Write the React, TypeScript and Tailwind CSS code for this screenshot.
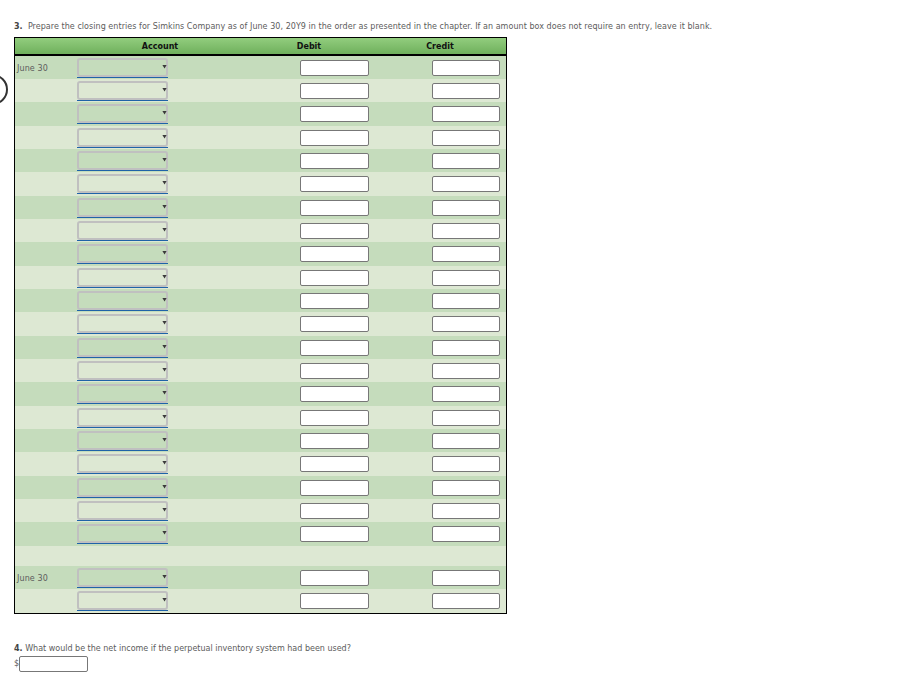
const font = "font-['DejaVu_Sans','Verdana',sans-serif]";

function Caret() {
  return (
    <svg width="5" height="4" viewBox="0 0 5 4" className="absolute right-[-1px] top-[5px]">
      <path d="M0.4 0H4.6L2.6 3.4Z" fill="#3a3a3a" />
    </svg>
  );
}

function Row({ date, index, h }: { date?: string; index: number; h: string }) {
  const bg = index % 2 === 0 ? "bg-[#c5dcbc]" : "bg-[#dde8d3]";
  return (
    <div className={`flex items-start ${h} ${bg}`}>
      <div className="mt-[8px] w-[62px] pl-[2px] text-[8px] leading-[10px] tracking-[0.1px] text-[#5c5c5c]">{date}</div>
      <div className="mt-[2px] w-[223px]">
        <div className="h-[20px] w-[91px] border-b border-[#1f63a8]">
          <div className="relative h-[19px] w-[91px] rounded-[3px] border-2 border-[#c0c0c0]">
            <Caret />
          </div>
        </div>
      </div>
      <div className="mt-[4px] w-[132px]">
        <div className="h-[16px] w-[69px] rounded-[2px] border border-[#777] bg-white" />
      </div>
      <div className="mt-[4px] h-[16px] w-[68px] rounded-[2px] border border-[#777] bg-white" />
    </div>
  );
}

export default function App() {
  const heights = ["h-[23px]", "h-[23px]", "h-[24px]"];
  const rows = Array.from({ length: 21 }, (_, i) => i);
  return (
    <div className={`${font} relative h-[687px] w-[922px] overflow-hidden bg-white pl-[14px] pt-[20px] text-[#5c5c5c]`}>
      <div className="absolute left-[-23px] top-[74px] h-[31px] w-[31px] rounded-full border-2 border-[#333]" />

      <p className="h-[17px] whitespace-nowrap pt-[1px] text-[8px] leading-[11px] tracking-[0.047px]">
        <b className="text-[#444]">3.</b>&nbsp; Prepare the closing entries for Simkins Company as of June 30, 20Y9 in the order as presented in the chapter. If an amount box does not require an entry, leave it blank.
      </p>

      <div className="w-[493px] border border-black">
        <div className="flex h-[18px] items-center border-b-2 border-black bg-gradient-to-b from-[#92cd7e] to-[#6fb05c] pt-[2px] text-[8px] font-bold leading-none text-[#111]">
          <div className="w-[63px]" />
          <div className="w-[164px] text-center">Account</div>
          <div className="w-[134px] text-center">Debit</div>
          <div className="w-[128px] text-center">Credit</div>
        </div>
        {rows.map((i) => (
          <Row key={i} index={i} date={i === 0 ? "June 30" : undefined} h={heights[i % 3]} />
        ))}
        <div className="h-[20px] bg-[#dde8d3]" />
        <Row index={0} date="June 30" h="h-[23px]" />
        <Row index={1} h="h-[24px]" />
      </div>

      <p className="mt-[29px] whitespace-nowrap text-[8px] leading-[11px]">
        <b className="text-[#444]">4.</b> What would be the net income if the perpetual inventory system had been used?
      </p>
      <div className="mt-[2px] flex items-center">
        <span className="w-[5px] text-[8px] leading-none">$</span>
        <div className="h-[16px] w-[69px] rounded-[2px] border border-[#777] bg-white" />
      </div>
    </div>
  );
}
